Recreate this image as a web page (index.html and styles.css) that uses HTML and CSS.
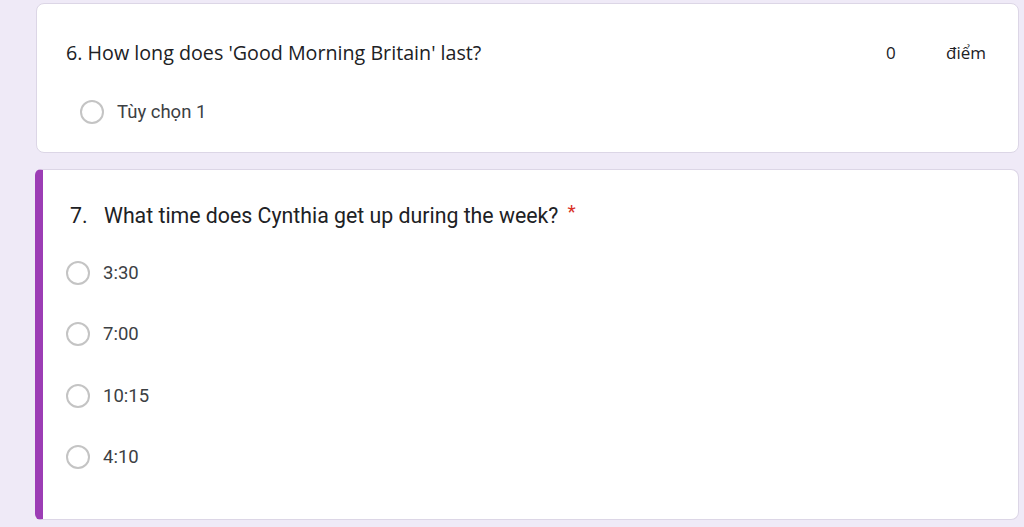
FILE: index.html
```html
<!DOCTYPE html>
<html lang="vi">
<head>
<meta charset="utf-8">
<link rel="stylesheet" href="styles.css">
</head>
<body>
<main class="page">
  <section class="card card-plain">
    <div class="q-head">
      <div class="q-title">6. How long does 'Good Morning Britain' last?</div>
      <div class="q-points"><span class="pts-num">0</span><span class="pts-label">điểm</span></div>
    </div>
    <div class="opt opt-first">
      <span class="radio"></span><span class="opt-label">Tùy chọn 1</span>
    </div>
  </section>

  <section class="card card-active">
    <div class="q2-head">
      <span class="q2-num">7.</span><span class="q2-text">What time does Cynthia get up during the week?</span><span class="req">*</span>
    </div>
    <div class="opt-list">
      <div class="opt"><span class="radio"></span><span class="opt-label">3:30</span></div>
      <div class="opt"><span class="radio"></span><span class="opt-label">7:00</span></div>
      <div class="opt"><span class="radio"></span><span class="opt-label">10:15</span></div>
      <div class="opt"><span class="radio"></span><span class="opt-label">4:10</span></div>
    </div>
  </section>
</main>
</body>
</html>
```

FILE: styles.css
```css
html, body {
  margin: 0;
  padding: 0;
  background: #efeaf7;
  height: 527px;
  overflow: hidden;
}

.page {
  display: flex;
  flex-direction: column;
  gap: 16px;
  padding: 3px 5px 0 35px;
}

.card {
  background: #ffffff;
  border-radius: 8px;
  border: 1px solid #dcd6e6;
  box-sizing: border-box;
}

.card-plain {
  margin-left: 1px;
  height: 150px;
  padding: 0 0 0 29px;
}

.q-head {
  display: flex;
  align-items: center;
  height: 36px;
  margin-top: 30px;
}

.q-title {
  font-family: "Open Sans", "Liberation Sans", sans-serif;
  font-size: 19.7px;
  color: #202124;
  flex: 1;
}

.q-points {
  display: flex;
  font-family: "Open Sans", "Liberation Sans", sans-serif;
  font-size: 17px;
  color: #202124;
  width: 132px;
}

.pts-num {
  width: 60px;
}

.opt {
  display: flex;
  align-items: center;
  height: 62px;
}

.opt-first {
  margin-top: 27px;
  height: 30px;
  padding-left: 14px;
}

.radio {
  width: 20px;
  height: 20px;
  border: 2px solid #c4c4c4;
  border-radius: 50%;
  flex-shrink: 0;
}

.opt-label {
  font-family: Roboto, "Liberation Sans", sans-serif;
  font-size: 18.5px;
  color: #3c4043;
  margin-left: 13px;
}

.card-active {
  height: 351px;
  border-left: 8px solid #9c3db5;
  padding-left: 23px;
  border-top-left-radius: 6px;
  border-bottom-left-radius: 6px;
}

.q2-head {
  display: flex;
  align-items: flex-start;
  margin-top: 33px;
  height: 28px;
  font-family: Roboto, "Liberation Sans", sans-serif;
  font-size: 21.3px;
  color: #202124;
}

.q2-num {
  width: 34px;
  margin-left: 4px;
}

.req {
  color: #d93025;
  margin-left: 9px;
  font-size: 19px;
  line-height: 1;
  margin-top: -1px;
}

.opt-list {
  margin-top: 11px;
  display: flex;
  flex-direction: column;
}

.opt-list .opt {
  height: 61.5px;
}
```
